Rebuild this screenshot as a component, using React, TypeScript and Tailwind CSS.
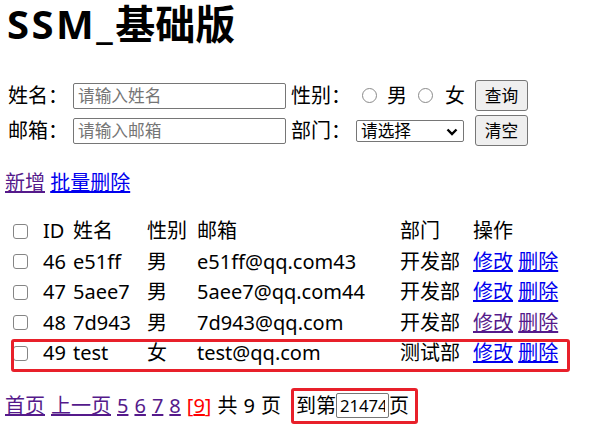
import { useState } from "react";

const rows = [
    { id: 46, name: "e51ff", gender: "男", email: "e51ff@qq.com43", dept: "开发部", visited: false, mark: false },
    { id: 47, name: "5aee7", gender: "男", email: "5aee7@qq.com44", dept: "开发部", visited: false, mark: false },
    { id: 48, name: "7d943", gender: "男", email: "7d943@qq.com", dept: "开发部", visited: true, mark: false },
    { id: 49, name: "test", gender: "女", email: "test@qq.com", dept: "测试部", visited: false, mark: true },
];

const font = { fontFamily: '"Noto Sans", "Noto Sans CJK SC", sans-serif' };

function Check() {
    return <input type="checkbox" className="appearance-none w-[15px] h-[15px] border border-[#858585] rounded-[3px] bg-white" />;
}

export default function App() {
    const [name, setName] = useState("");
    const [email, setEmail] = useState("");

    return (
        <div style={font} className="w-[593px] h-[434px] overflow-hidden bg-white text-black text-[20px]">
            <h1 className="pl-[7px] text-[40px] font-bold leading-[48px]">
                <span className="tracking-[2.5px]">SSM_</span>基础版
            </h1>

            {/* search form */}
            <div className="mt-[32px] flex items-center h-[31px] leading-[26px]">
                <span className="ml-[8px]">姓名：</span>
                <input value={name} onChange={(e) => setName(e.target.value)} placeholder="请输入姓名" className="ml-[5px] w-[213px] h-[26px] px-[4px] text-[16.7px] border border-[#767676] rounded-[2px] placeholder:text-[#757575] outline-none" />
                <span className="ml-[5px]">性别：</span>
                <input type="radio" name="gender" className="ml-[11px] appearance-none w-[15px] h-[15px] rounded-full border border-[#8a8a8a] bg-white" />
                <span className="ml-[10px]">男</span>
                <input type="radio" name="gender" className="ml-[11px] appearance-none w-[15px] h-[15px] rounded-full border border-[#8a8a8a] bg-white" />
                <span className="ml-[12px]">女</span>
                <button className="ml-[10px] w-[53px] h-[31px] text-[16.7px] bg-[#efefef] border border-[#767676] rounded-[3px]">查询</button>
            </div>
            <div className="mt-[4px] flex items-center h-[31px] leading-[26px]">
                <span className="ml-[8px]">邮箱：</span>
                <input value={email} onChange={(e) => setEmail(e.target.value)} placeholder="请输入邮箱" className="ml-[5px] w-[213px] h-[26px] px-[4px] text-[16.7px] border border-[#767676] rounded-[2px] placeholder:text-[#757575] outline-none" />
                <span className="ml-[5px]">部门：</span>
                <span className="relative ml-[5px] flex">
                    <select className="appearance-none w-[108px] h-[22px] pl-[4px] text-[16.7px] leading-[20px] border border-[#767676] rounded-[2px] bg-white outline-none">
                        <option>请选择</option>
                        <option>开发部</option>
                        <option>测试部</option>
                    </select>
                    <svg className="absolute right-[6px] top-[8px] pointer-events-none" width="12" height="8" viewBox="0 0 12 8">
                        <path d="M1.5 1.5 L6 6 L10.5 1.5" fill="none" stroke="#000" strokeWidth="2.4" />
                    </svg>
                </span>
                <button className="ml-[11px] w-[53px] h-[31px] text-[16.7px] bg-[#efefef] border border-[#767676] rounded-[3px]">清空</button>
            </div>

            <div className="mt-[24px] pl-[5px] leading-[26px]">
                <a href="#" className="underline text-[#551a8b]">新增</a> <a href="#" className="underline text-[#0000ee]">批量删除</a>
            </div>

            {/* list */}
            <div className="mt-[20px] ml-[13px] w-[560px]">
                <div className="grid grid-cols-[30px_30px_74px_50px_203px_73px_auto] items-center h-[30.5px] leading-[26px]">
                    <span className="flex"><Check /></span>
                    <span>ID</span>
                    <span>姓名</span>
                    <span>性别</span>
                    <span>邮箱</span>
                    <span>部门</span>
                    <span>操作</span>
                </div>
                {rows.map((r) => (
                    <div key={r.id} className="relative grid grid-cols-[30px_30px_74px_50px_203px_73px_auto] items-center h-[30.5px] leading-[26px]">
                        <span className="flex"><Check /></span>
                        <span>{r.id}</span>
                        <span>{r.name}</span>
                        <span>{r.gender}</span>
                        <span>{r.email}</span>
                        <span>{r.dept}</span>
                        <span className={r.visited ? "text-[#551a8b]" : "text-[#0000ee]"}>
                            <a href="#" className="underline">修改</a> <a href="#" className="underline">删除</a>
                        </span>
                        {r.mark && <span className="absolute -left-[2px] top-[1px] w-[559px] h-[33px] border-[3px] border-[#e8202a] rounded-[3px] pointer-events-none" />}
                    </div>
                ))}
            </div>

            {/* pager */}
            <div className="mt-[19px] pl-[5px] flex items-center gap-[6px] h-[36px] leading-[26px]">
                <a href="#" className="underline text-[#551a8b]">首页</a>
                <a href="#" className="underline text-[#551a8b]">上一页</a>
                <a href="#" className="underline text-[#551a8b]">5</a>
                <a href="#" className="underline text-[#551a8b]">6</a>
                <a href="#" className="underline text-[#551a8b]">7</a>
                <a href="#" className="underline text-[#551a8b]">8</a>
                <span className="text-[#ff0000]">[<a href="#" className="underline">9</a>]</span>
                <span>共</span>
                <span>9</span>
                <span>页</span>
                <span className="ml-[4px] flex items-center h-[36px] pl-[2px] pr-[6px] border-[3px] border-[#e8202a] rounded-[3px]">
                    到第<input defaultValue="21474" className="w-[53px] h-[25px] px-[3px] text-[16.7px] border border-[#767676] rounded-[2px] outline-none" />页
                </span>
            </div>
        </div>
    );
}
